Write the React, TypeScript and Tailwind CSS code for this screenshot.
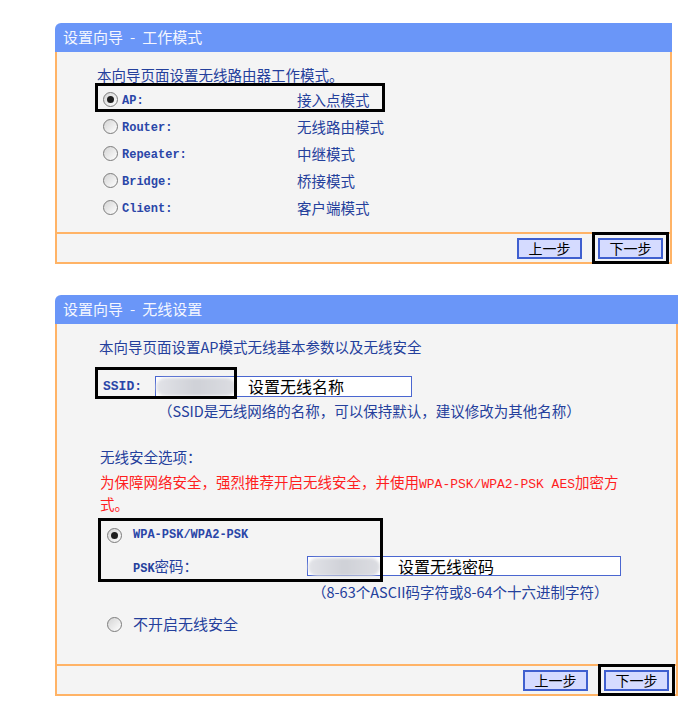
const cjk = "font-['Noto_Sans_CJK_SC','Noto_Sans',sans-serif]";
const mono = "font-['Liberation_Mono','DejaVu_Sans_Mono',monospace]";

function Radio({ checked = false }: { checked?: boolean }) {
  return (
    <span className="flex h-[15px] w-[15px] shrink-0 items-center justify-center rounded-full border-[1.5px] border-[#7c7c7c] bg-gradient-to-br from-[#d4d4d4] to-white">
      {checked && <span className="h-[7px] w-[7px] rounded-full bg-[#1e1e1e]" />}
    </span>
  );
}

function WizardButton({ children }: { children: React.ReactNode }) {
  return (
    <button className="flex h-[21px] w-[65px] items-center justify-center border-2 border-[#3f5fcf] bg-[#d5dbff] text-[14px] leading-none text-black">
      {children}
    </button>
  );
}

// thick black frame drawn on top of a field group
function Frame({ className }: { className: string }) {
  return <div className={`pointer-events-none absolute border-[3px] border-black ${className}`} />;
}

function WizardPanel({
  title,
  width,
  children,
}: {
  title: [string, string];
  width: string;
  children: React.ReactNode;
}) {
  return (
    <section className={width}>
      <div className="flex h-[29px] items-center rounded-tl-[6px] bg-[#6a96f8] pl-[8px] text-[15px] text-[#f4f6ff]">
        <span>{title[0]}</span>
        <span className="mx-[7px]">-</span>
        <span>{title[1]}</span>
      </div>
      <div className="relative border-x-2 border-[#ffb366] bg-[#f4f4f4]">{children}</div>
      <footer className="flex h-[32px] items-center justify-end gap-[10px] border-2 border-[#ffb366] bg-[#f4f4f4] pr-[1px]">
        <WizardButton>上一步</WizardButton>
        <div className="-my-[2px] flex h-[32px] items-center border-[3px] border-black px-[3px]">
          <WizardButton>下一步</WizardButton>
        </div>
      </footer>
    </section>
  );
}

const modes = [
  { key: "AP:", name: "接入点模式", checked: true },
  { key: "Router:", name: "无线路由模式" },
  { key: "Repeater:", name: "中继模式" },
  { key: "Bridge:", name: "桥接模式" },
  { key: "Client:", name: "客户端模式" },
];

function BlurredValue({ className }: { className: string }) {
  return (
    <div
      className={`absolute top-[1px] h-[18px] rounded-full bg-gradient-to-r from-[#e2e3e8] via-[#cfd1d7] to-[#dcdde2] blur-[1.5px] ${className}`}
    />
  );
}

export default function App() {
  return (
    <div className={`min-h-[727px] w-[700px] bg-white pl-[55px] pt-[23px] ${cjk}`}>
      <WizardPanel title={["设置向导", "工作模式"]} width="w-[617px]">
        <div className="pl-[40px] pt-[12px] pb-[11px]">
          <p className="h-[22px] text-[14.5px] leading-[22px] text-[#24409c]">
            本向导页面设置无线路由器工作模式。
          </p>
          {modes.map((m) => (
            <div key={m.key} className="ml-[6px] grid h-[27px] grid-cols-[194px_auto] items-center">
              <div className="flex items-center gap-[4px]">
                <Radio checked={m.checked} />
                <span className={`${mono} pt-[3px] text-[12px] font-bold text-[#2a46a8]`}>{m.key}</span>
              </div>
              <span className="text-[14.5px] text-[#24409c]">{m.name}</span>
            </div>
          ))}
        </div>
        <Frame className="left-[38px] top-[31px] h-[29px] w-[290px]" />
      </WizardPanel>

      <div className="h-[31px]" />

      <WizardPanel title={["设置向导", "无线设置"]} width="w-[623px]">
        <div className="pl-[42px] pt-[12px] pb-[29px] text-[14.5px] text-[#24409c]">
          <p className="h-[22px] leading-[22px]">本向导页面设置AP模式无线基本参数以及无线安全</p>

          <div className="mt-[18px] flex h-[21px] items-center">
            <span className={`${mono} ml-[4px] w-[52px] text-[13px] font-bold text-[#2a46a8]`}>SSID:</span>
            <div className="relative h-[21px] w-[257px] border border-[#4a66d0] bg-white pl-[92px] text-[16px] leading-[19px] text-black">
              <BlurredValue className="left-0 w-[80px]" />
              设置无线名称
            </div>
          </div>

          <p className="mt-[3px] h-[22px] pl-[59px] leading-[22px]">
            （SSID是无线网络的名称，可以保持默认，建议修改为其他名称）
          </p>

          <p className="mt-[24px] h-[22px] pl-[1px] leading-[22px]">无线安全选项：</p>
          <p className="mt-[3px] h-[22px] pl-[1px] leading-[22px] text-[#ff1e1e]">
            为保障网络安全，强烈推荐开启无线安全，并使用
            <span className={`${mono} text-[13px]`}>WPA-PSK/WPA2-PSK AES</span>加密方
          </p>
          <p className="h-[22px] pl-[1px] leading-[22px] text-[#ff1e1e]">式。</p>

          <div className="mt-[9px] flex h-[22px] items-center gap-[11px] pl-[8px]">
            <Radio checked />
            <span className={`${mono} text-[12px] font-bold text-[#2a46a8]`}>WPA-PSK/WPA2-PSK</span>
          </div>

          <div className="mt-[10px] flex h-[20px] items-center pl-[34px]">
            <span className="w-[174px]">
              <span className={`${mono} text-[12px] font-bold`}>PSK</span>密码：
            </span>
            <div className="relative h-[20px] w-[314px] border border-[#4a66d0] bg-white pl-[90px] text-[16px] leading-[18px] text-black">
              <BlurredValue className="left-0 w-[72px]" />
              设置无线密码
            </div>
          </div>

          <p className="mt-[5px] h-[22px] pl-[213px] leading-[22px]">
            （8-63个ASCII码字符或8-64个十六进制字符）
          </p>

          <div className="mt-[10px] flex h-[22px] items-center gap-[11px] pl-[8px]">
            <Radio />
            <span className="text-[15px]">不开启无线安全</span>
          </div>
        </div>
        <Frame className="left-[38px] top-[43px] h-[32px] w-[142px]" />
        <Frame className="left-[41px] top-[194px] h-[64px] w-[285px]" />
      </WizardPanel>
    </div>
  );
}
